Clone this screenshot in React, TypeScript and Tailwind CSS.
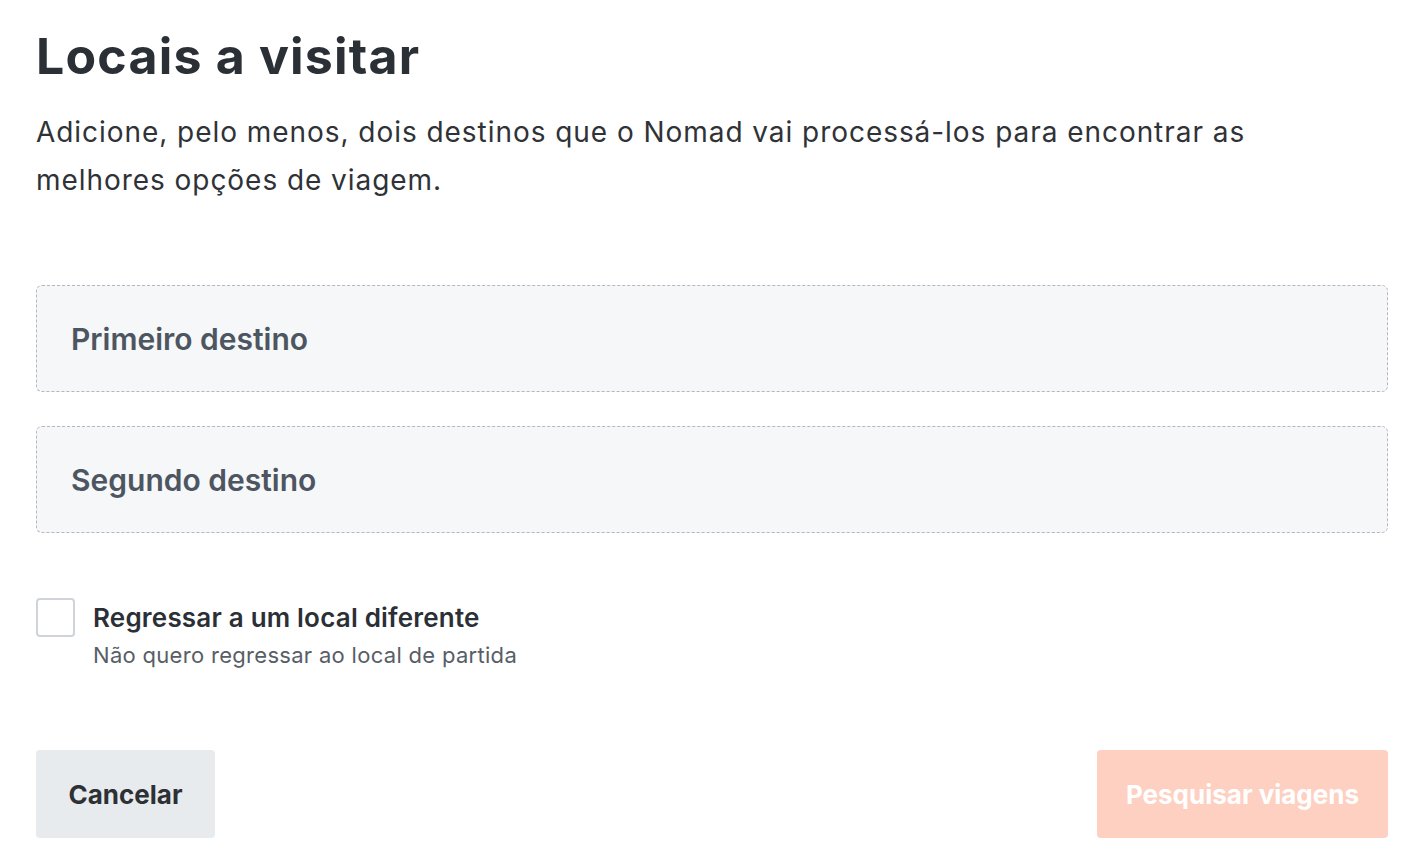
import { useState } from 'react'

export default function App() {
  const [differentReturn, setDifferentReturn] = useState(false)

  return (
    <div className="min-h-screen bg-white pl-[36px] pr-[38px] pt-[24px] text-[#2b2f36] font-['Inter',sans-serif]">
      <h1 className="text-[50px] font-bold leading-[64px] tracking-[1.2px]">Locais a visitar</h1>
      <p className="mt-[20px] max-w-[1270px] text-[28px] leading-[48px] tracking-[0.95px] text-[#2f3237]">
        Adicione, pelo menos, dois destinos que o Nomad vai processá-los para encontrar as melhores opções de viagem.
      </p>

      <div className="mt-[81px] flex flex-col gap-[34px]">
        <input
          placeholder="Primeiro destino"
          className="h-[107px] w-full rounded-[6px] border border-dashed border-[#b4b8bc] bg-[#f5f7f9] px-[34px] text-[30px] font-semibold text-[#4d5660] placeholder:text-[#4d5660] outline-none"
        />
        <input
          placeholder="Segundo destino"
          className="h-[107px] w-full rounded-[6px] border border-dashed border-[#b4b8bc] bg-[#f5f7f9] px-[34px] text-[30px] font-semibold text-[#4d5660] placeholder:text-[#4d5660] outline-none"
        />
      </div>

      <label className="mt-[65px] flex cursor-pointer items-start gap-[18px]">
        <input
          type="checkbox"
          checked={differentReturn}
          onChange={(e) => setDifferentReturn(e.target.checked)}
          className="sr-only"
        />
        <span className="h-[39px] w-[39px] shrink-0 rounded-[4px] border-2 border-[#d0d4d8] bg-white" />
        <span className="flex flex-col">
          <span className="text-[26px] font-semibold leading-[40px] tracking-[0.2px] text-[#2b2f36]">
            Regressar a um local diferente
          </span>
          <span className="text-[22px] leading-[34px] tracking-[0.3px] text-[#585e66]">
            Não quero regressar ao local de partida
          </span>
        </span>
      </label>

      <div className="mt-[78px] flex items-center justify-between">
        <button className="h-[88px] w-[179px] rounded-[4px] bg-[#e8ebee] text-[26px] font-bold text-[#2d3035]">
          Cancelar
        </button>
        <button className="h-[88px] w-[291px] rounded-[4px] bg-[#fdd0c2] text-[26px] font-bold text-white" disabled>
          Pesquisar viagens
        </button>
      </div>
    </div>
  )
}
